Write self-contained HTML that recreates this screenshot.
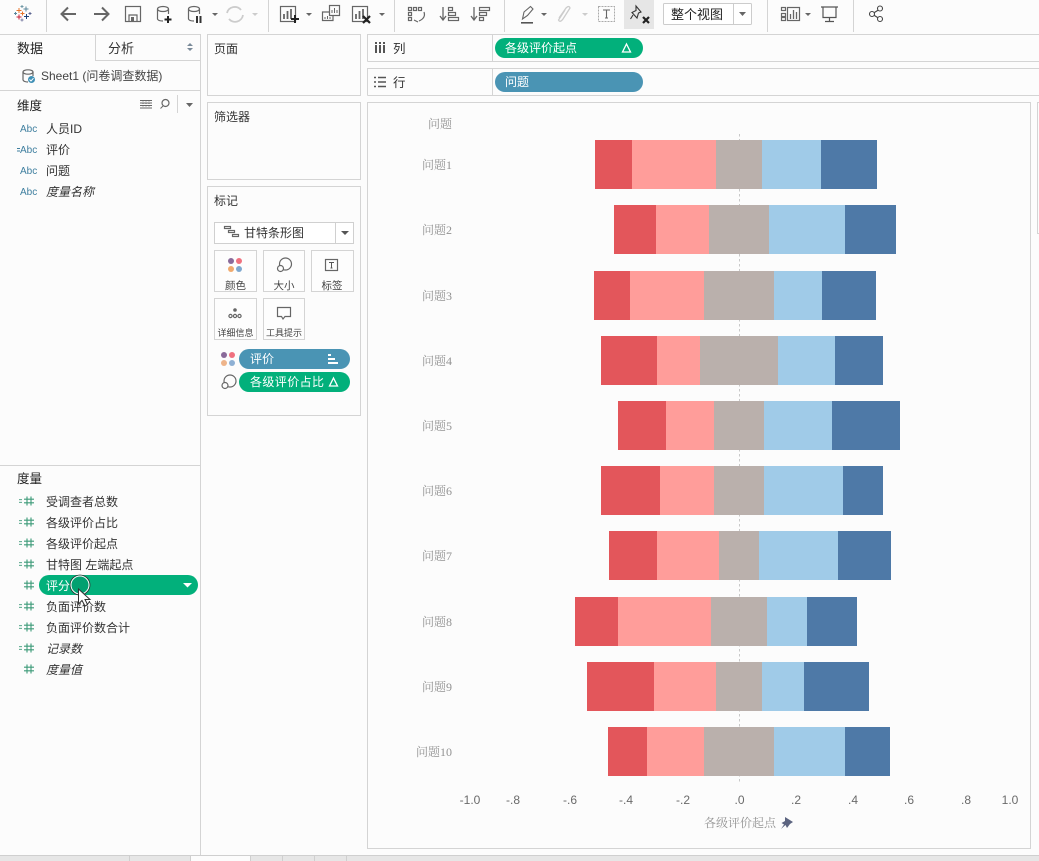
<!DOCTYPE html>
<html><head><meta charset="utf-8"><style>
html,body{margin:0;padding:0;background:#fcfcfc;width:1039px;height:861px;overflow:hidden}
svg{display:block}
text{font-family:"Liberation Sans","Noto Sans CJK SC",sans-serif;font-size:12px;fill:#333}
.c{font-family:"Liberation Serif","Noto Serif CJK SC",serif;font-size:12px;fill:#929292}
.t{font-size:12px;fill:#6a6a6a}
.w{fill:#fff}
.a{font-size:10px;fill:#3f7f9f}
.i{font-style:italic}
.s{font-size:10.5px;fill:#444}
.xs{font-size:9px;fill:#444}
.ln{stroke:#d4d4d4;stroke-width:1;fill:none}
.ic{stroke:#666;stroke-width:1.2;fill:none}
.g{stroke:#3c9a78;stroke-width:1.1;fill:none}
</style></head><body>
<svg width="1039" height="861" viewBox="0 0 1039 861" xmlns="http://www.w3.org/2000/svg">
<rect width="1039" height="861" fill="#fcfcfc"/>
<!-- toolbar separators -->
<g class="ln"><path d="M46.500 0V32M268.500 0V32M394.500 0V32M504.500 0V32M767.500 0V32M853.500 0V32"/></g>
<!-- logo -->
<g stroke-width="1" fill="none">
<path d="M19 8V13M16.500 10.500H21.500" stroke="#e8762b"/>
<path d="M19 14.500V19.500M16.500 17H21.500" stroke="#c72037"/>
<path d="M26 6.500V11.500M23.500 9H28.500" stroke="#5b879b"/>
<path d="M26.500 14V19M24 16.500H29" stroke="#1f447a"/>
<path d="M22.500 11.500V15.500M20.500 13.500H24.500" stroke="#e8762b"/>
<path d="M22 5V8M20.500 6.500H23.500" stroke="#7099a6"/>
<path d="M22 18.500V21.500M20.500 20H23.500" stroke="#7c7fa5"/>
<path d="M15.500 12V15M14 13.500H17" stroke="#59879b"/>
<path d="M30 12V15M28.500 13.500H31.500" stroke="#5b6591"/>
</g>
<!-- back / forward -->
<path d="M76 14H62M68 7.500L61.500 14L68 20.500" stroke="#666" stroke-width="2" fill="none"/>
<path d="M94 14H108M102 7.500L108.500 14L102 20.500" stroke="#666" stroke-width="2" fill="none"/>
<!-- save -->
<g class="ic"><rect x="125.500" y="6.500" width="15" height="15"/><path d="M129 21V15H137V21"/></g><rect x="131" y="17" width="3" height="4" fill="#666"/>
<!-- data + -->
<g class="ic"><ellipse cx="163" cy="9" rx="5.500" ry="2.500"/><path d="M157.500 9V19Q158 21 163 21M168.500 9V14"/></g>
<path d="M168 16V23M164.500 19.500H171.500" stroke="#222" stroke-width="2"/>
<g class="ic"><ellipse cx="194" cy="9" rx="5.500" ry="2.500"/><path d="M188.500 9V19Q189 21 194 21M199.500 9V14"/></g>
<path d="M197 16V23M200.500 16V23" stroke="#333" stroke-width="2"/>
<path d="M212 13H218L215 16Z" fill="#666"/>
<g fill="none" stroke="#ccc" stroke-width="1.800"><path d="M227 13A8 8 0 0 1 241 10"/><path d="M243 15A8 8 0 0 1 229 19"/></g>
<path d="M252 13H258L255 16Z" fill="#ccc"/>
<!-- new worksheet -->
<g class="ic"><rect x="280.500" y="6.500" width="15" height="15"/></g>
<path d="M284 19V14M287.500 19V11M291 19V9" stroke="#666" stroke-width="1.800"/>
<path d="M295 15V23M291 19H299" stroke="#222" stroke-width="2"/>
<path d="M306 13H312L309 16Z" fill="#666"/>
<g class="ic" stroke-width="1"><rect x="329.500" y="5.500" width="10" height="10" fill="#fcfcfc"/><path d="M329 12H322.500V20.500H333V16"/></g>
<path d="M332 13V10M334.500 13V8M337 13V10M325 19V17M327.500 19V16M330 19V17" stroke="#666"/>
<g class="ic"><rect x="352.500" y="6.500" width="15" height="15"/></g>
<path d="M356 19V14M359.500 19V11M363 19V9" stroke="#666" stroke-width="1.800"/>
<path d="M363 16L370 23M370 16L363 23" stroke="#222" stroke-width="2.200"/>
<path d="M379 13H385L382 16Z" fill="#666"/>
<!-- swap -->
<g class="ic" stroke-width="1"><rect x="408.500" y="7.500" width="3" height="3"/><rect x="413.500" y="7.500" width="3" height="3"/><rect x="418.500" y="7.500" width="3" height="3"/><rect x="408.500" y="12.500" width="3" height="3"/><rect x="408.500" y="17.500" width="3" height="3"/><path d="M424 12Q426 18 419 21M414 20L418 22"/></g>
<!-- sort -->
<path d="M443 7V19M440 16L443 20L446 16" stroke="#666" stroke-width="1.300" fill="none"/>
<g class="ic" stroke-width="1"><rect x="448.500" y="7.500" width="4" height="3"/><rect x="448.500" y="12.500" width="7" height="3"/><rect x="448.500" y="17.500" width="10" height="3"/></g>
<path d="M474 7V19M471 16L474 20L477 16" stroke="#666" stroke-width="1.300" fill="none"/>
<g class="ic" stroke-width="1"><rect x="479.500" y="7.500" width="10" height="3"/><rect x="479.500" y="12.500" width="7" height="3"/><rect x="479.500" y="17.500" width="4" height="3"/></g>
<!-- highlight -->
<path d="M522.500 19L524 12L530.500 6.500L533 9L527.500 15.500Z" stroke="#666" stroke-width="1.100" fill="none"/>
<rect x="521" y="22" width="12" height="1.600" fill="#555"/>
<path d="M541 13H547L544 16Z" fill="#666"/>
<path d="M559 18L566 8Q569 5 570 8L563 19Q560 23 558.500 20L565 10" stroke="#ccc" stroke-width="1.300" fill="none"/>
<path d="M582 13H588L585 16Z" fill="#ccc"/>
<rect x="598.500" y="6.500" width="16" height="15" fill="none" stroke="#aaa" stroke-dasharray="2 1"/>
<path d="M603 10H610M606.500 10V18M605 18H608" stroke="#666" stroke-width="1.100" fill="none"/>
<!-- pin active -->
<rect x="624" y="0" width="30" height="29" fill="#e6e6e6"/>
<path d="M636 6L641 12L638.500 13L637 18L632 12.500L636 10.500ZM633 15L630.500 19" stroke="#333" stroke-width="1.100" fill="none"/>
<path d="M643 17L649 23M649 17L643 23" stroke="#222" stroke-width="2.200"/>
<!-- view dropdown -->
<rect x="663.500" y="3.500" width="88" height="21" rx="1" fill="#fff" stroke="#ccc"/>
<path d="M733.500 3V25" stroke="#ccc"/>
<text x="671" y="19" style="font-size:13px;fill:#222">整个视图</text>
<path d="M739 12H746L742.500 16Z" fill="#666"/>
<!-- show me -->
<g class="ic" stroke-width="1"><rect x="781.500" y="7.500" width="4" height="3"/><rect x="781.500" y="13.500" width="4" height="3"/><rect x="781.500" y="17.500" width="4" height="3"/><rect x="787.500" y="7.500" width="12" height="13"/></g>
<path d="M790.500 19V14M793.500 19V10M796.500 19V12" stroke="#666" stroke-width="1.300"/>
<path d="M805 13H811L808 16Z" fill="#666"/>
<!-- presentation -->
<path d="M821 7H838M823 7.500V17.500H836V7.500M829.500 17.500V22M825 21.500H834" stroke="#555" stroke-width="1.200" fill="none"/>
<!-- share -->
<g stroke="#444" stroke-width="1.100" fill="#fcfcfc"><path d="M872 14L880 9M872 14L880 19"/><circle cx="872" cy="14" r="2.500"/><circle cx="880" cy="8.500" r="2.500"/><circle cx="880" cy="19" r="2.500"/></g>

<!-- left panel -->
<g class="ln">
<path d="M0 34.500H200.500V855"/>
<path d="M95.500 35V60.500H200"/>
<path d="M0 90.500H200"/>
<path d="M177.500 95V113"/>
<path d="M0 465.500H200"/>
</g>
<text x="17" y="53" style="font-size:13px;fill:#222">数据</text>
<text x="108" y="53" style="font-size:13px;fill:#333">分析</text>
<path d="M187 46L190 43L193 46ZM187 48L190 51L193 48Z" fill="#7a8a99"/>
<g class="ic" stroke-width="1"><ellipse cx="28" cy="72" rx="5" ry="2.200"/><path d="M23 72V80Q24 82 28 82M33 72V76"/></g>
<circle cx="31.500" cy="79.500" r="3.500" fill="#3f8fb5"/>
<path d="M29.500 79.500L31 81L33.500 78.200" stroke="#fff" fill="none"/>
<text x="41" y="80" style="font-size:12px;fill:#444">Sheet1 (问卷调查数据)</text>

<text x="17" y="110" style="font-size:12.500px;fill:#222">维度</text>
<g stroke="#666" stroke-width="0.900"><path d="M140 100.500H152M140 103H152M140 105.500H152M140 108H152"/><path d="M143 100V108M146 100V108M149 100V108" stroke-dasharray="1.500 1"/></g>
<circle cx="165.500" cy="103" r="3.500" class="ic" stroke-width="1"/><path d="M163 106L160.500 108.500" stroke="#666"/>
<path d="M186 103H193L189.500 107Z" fill="#666"/>
<text x="20" y="132" class="a">Abc</text><text x="46" y="133">人员ID</text>
<path d="M17 148.500H20M17 151H20" stroke="#3f7f9f" stroke-width="0.900"/><text x="20" y="153" class="a">Abc</text><text x="46" y="154">评价</text>
<text x="20" y="174" class="a">Abc</text><text x="46" y="175">问题</text>
<text x="20" y="195" class="a">Abc</text><text x="46" y="196" class="i">度量名称</text>

<text x="17" y="483" style="font-size:12.500px;fill:#222">度量</text>
<defs><g id="h"><path d="M3 -4.500L3 4.500M7 -4.500L7 4.500M0 -1.800H10M0 1.800H10" class="g"/></g>
<g id="e"><path d="M-5 -1.300H-2M-5 1.300H-2" stroke="#3c9a78" stroke-width="0.900"/></g></defs>
<g transform="translate(24,501)"><use href="#e"/><use href="#h"/></g><text x="46" y="506">受调查者总数</text>
<g transform="translate(24,522)"><use href="#e"/><use href="#h"/></g><text x="46" y="527">各级评价占比</text>
<g transform="translate(24,543)"><use href="#e"/><use href="#h"/></g><text x="46" y="548">各级评价起点</text>
<g transform="translate(24,564)"><use href="#e"/><use href="#h"/></g><text x="46" y="569">甘特图 左端起点</text>
<g transform="translate(24,585)"><use href="#h"/></g>
<rect x="39" y="575" width="159" height="20" rx="10" fill="#02b07b"/>
<text x="46" y="590" class="w">评分</text>
<path d="M183 583H192L187.500 587.500Z" fill="#fff"/>
<g transform="translate(24,606)"><use href="#e"/><use href="#h"/></g><text x="46" y="611">负面评价数</text>
<g transform="translate(24,627)"><use href="#e"/><use href="#h"/></g><text x="46" y="632">负面评价数合计</text>
<g transform="translate(24,648)"><use href="#e"/><use href="#h"/></g><text x="46" y="653" class="i">记录数</text>
<g transform="translate(24,669)"><use href="#h"/></g><text x="46" y="674" class="i">度量值</text>
<circle cx="80" cy="585" r="9" fill="#02a070" stroke="#fff" stroke-width="1"/>
<circle cx="80" cy="585" r="10" fill="none" stroke="#333" stroke-width="0.800"/>
<path d="M78.500 589V604L82 600.500L85 606L87.500 604.500L85 599.500H90Z" fill="#fff" stroke="#333" stroke-width="1"/>

<!-- middle cards -->
<g class="ln">
<rect x="207.500" y="34.500" width="153" height="61"/>
<rect x="207.500" y="102.500" width="153" height="77"/>
<rect x="207.500" y="186.500" width="153" height="229"/>
</g>
<text x="214" y="53">页面</text>
<text x="214" y="121">筛选器</text>
<text x="214" y="205">标记</text>
<rect x="214.500" y="222.500" width="139" height="21" fill="#fff" stroke="#d0d0d0"/>
<path d="M335.500 223V243" stroke="#d0d0d0"/>
<g class="ic" stroke-width="0.900"><rect x="224.500" y="226.500" width="6" height="2"/><rect x="228.500" y="230.500" width="6" height="2"/><rect x="232.500" y="234.500" width="6" height="2"/></g>
<text x="244" y="237">甘特条形图</text>
<path d="M341 231H349L345 235Z" fill="#555"/>
<g fill="#fdfdfd" stroke="#d4d4d4">
<rect x="214.500" y="250.500" width="42" height="41"/>
<rect x="263.500" y="250.500" width="41" height="41"/>
<rect x="311.500" y="250.500" width="42" height="41"/>
<rect x="214.500" y="298.500" width="42" height="41"/>
<rect x="263.500" y="298.500" width="41" height="41"/>
</g>
<circle cx="231" cy="261" r="3" fill="#8a6a9a"/><circle cx="239" cy="261" r="3" fill="#f0717f"/><circle cx="231" cy="269" r="3" fill="#f0aa6e"/><circle cx="239" cy="269" r="3" fill="#7ea8cf"/>
<text x="235.500" y="289" text-anchor="middle" class="s">颜色</text>
<g class="ic" stroke-width="1"><circle cx="285.500" cy="264" r="6"/><circle cx="280.500" cy="268.500" r="3" fill="#fdfdfd"/></g>
<text x="284" y="289" text-anchor="middle" class="s">大小</text>
<rect x="325.500" y="259.500" width="12" height="11" class="ic" stroke-width="1"/><path d="M329 262.500H334M331.500 262.500V268M330.500 268H332.500" stroke="#555" fill="none"/>
<text x="332" y="289" text-anchor="middle" class="s">标签</text>
<circle cx="235" cy="310" r="1.800" fill="#666"/><g class="ic" stroke-width="0.800"><circle cx="230.500" cy="316" r="1.600"/><circle cx="235" cy="316" r="1.600"/><circle cx="239.500" cy="316" r="1.600"/></g>
<text x="235.500" y="336" text-anchor="middle" class="xs">详细信息</text>
<path d="M277.500 307.500H290.500V316.500H285L283 319L281.500 316.500H277.500Z" class="ic" stroke-width="1"/>
<text x="284" y="336" text-anchor="middle" class="xs">工具提示</text>
<circle cx="224" cy="355" r="3" fill="#8a6a9a"/><circle cx="232" cy="355" r="3" fill="#f0717f"/><circle cx="224" cy="363" r="3" fill="#eeb48a"/><circle cx="232" cy="363" r="3" fill="#8eb0d4"/>
<rect x="239" y="349" width="111" height="20" rx="10" fill="#4a94b4"/>
<text x="250" y="363" class="w">评价</text>
<path d="M328 354H331V356H328ZM328 358H335V360H328ZM328 362H338V364H328Z" fill="#fff"/>
<g class="ic" stroke-width="1"><circle cx="230" cy="381" r="6"/><circle cx="225" cy="385.500" r="3" fill="#fcfcfc"/></g>
<rect x="239" y="372" width="111" height="20" rx="10" fill="#02b07b"/>
<text x="250" y="386" class="w" style="letter-spacing:.4px">各级评价占比</text>
<path d="M333.500 378L337.500 386H329.500Z" stroke="#fff" stroke-width="1.300" fill="none"/>

<!-- shelves -->
<g class="ln">
<path d="M367.500 61.500V34.500H1039M367.500 61.500H1039"/>
<path d="M367.500 95.500V68.500H1039M367.500 95.500H1039"/>
<path d="M492.500 35V61M492.500 69V95"/>
</g>
<path d="M376 45V53M380 45V53M384 45V53" stroke="#555" stroke-width="2"/>
<path d="M376 42V44M380 42V44M384 42V44" stroke="#555" stroke-width="2"/>
<text x="393" y="53" style="font-size:12.500px">列</text>
<path d="M374 77.500H376M374 82H376M374 86.500H376M378 77.500H386M378 82H386M378 86.500H386" stroke="#555" stroke-width="1.600"/>
<text x="393" y="87" style="font-size:12.500px">行</text>
<rect x="495" y="38" width="148" height="20" rx="10" fill="#02b07b"/>
<text x="505" y="52" class="w">各级评价起点</text>
<path d="M626.500 44L630.500 52H622.500Z" stroke="#fff" stroke-width="1.300" fill="none"/>
<rect x="495" y="72" width="148" height="20" rx="10" fill="#4a94b4"/>
<text x="505" y="86" class="w">问题</text>

<!-- viz frame -->
<path d="M367.500 848.500V102.500H1030.500V848.500Z" class="ln" fill="#fdfdfd"/>
<path d="M1039 102.500H1037.500V233.500H1039" class="ln"/>
<path d="M739.500 134V784" stroke="#c8c8c8" stroke-dasharray="2.500 2.500"/>
<!-- bars -->
<g>
<rect x="595" y="140" width="37" height="49" fill="#e3565b"/><rect x="632" y="140" width="84" height="49" fill="#ff9d9a"/><rect x="716" y="140" width="46" height="49" fill="#bab0ac"/><rect x="762" y="140" width="59" height="49" fill="#a0cbe8"/><rect x="821" y="140" width="56" height="49" fill="#4e79a7"/>
<rect x="614" y="205" width="42" height="49" fill="#e3565b"/><rect x="656" y="205" width="53" height="49" fill="#ff9d9a"/><rect x="709" y="205" width="60" height="49" fill="#bab0ac"/><rect x="769" y="205" width="76" height="49" fill="#a0cbe8"/><rect x="845" y="205" width="51" height="49" fill="#4e79a7"/>
<rect x="594" y="271" width="36" height="49" fill="#e3565b"/><rect x="630" y="271" width="74" height="49" fill="#ff9d9a"/><rect x="704" y="271" width="70" height="49" fill="#bab0ac"/><rect x="774" y="271" width="48" height="49" fill="#a0cbe8"/><rect x="822" y="271" width="54" height="49" fill="#4e79a7"/>
<rect x="601" y="336" width="56" height="49" fill="#e3565b"/><rect x="657" y="336" width="43" height="49" fill="#ff9d9a"/><rect x="700" y="336" width="78" height="49" fill="#bab0ac"/><rect x="778" y="336" width="57" height="49" fill="#a0cbe8"/><rect x="835" y="336" width="48" height="49" fill="#4e79a7"/>
<rect x="618" y="401" width="48" height="49" fill="#e3565b"/><rect x="666" y="401" width="48" height="49" fill="#ff9d9a"/><rect x="714" y="401" width="50" height="49" fill="#bab0ac"/><rect x="764" y="401" width="68" height="49" fill="#a0cbe8"/><rect x="832" y="401" width="68" height="49" fill="#4e79a7"/>
<rect x="601" y="466" width="59" height="49" fill="#e3565b"/><rect x="660" y="466" width="54" height="49" fill="#ff9d9a"/><rect x="714" y="466" width="50" height="49" fill="#bab0ac"/><rect x="764" y="466" width="79" height="49" fill="#a0cbe8"/><rect x="843" y="466" width="40" height="49" fill="#4e79a7"/>
<rect x="609" y="531" width="48" height="49" fill="#e3565b"/><rect x="657" y="531" width="62" height="49" fill="#ff9d9a"/><rect x="719" y="531" width="40" height="49" fill="#bab0ac"/><rect x="759" y="531" width="79" height="49" fill="#a0cbe8"/><rect x="838" y="531" width="53" height="49" fill="#4e79a7"/>
<rect x="575" y="597" width="43" height="49" fill="#e3565b"/><rect x="618" y="597" width="93" height="49" fill="#ff9d9a"/><rect x="711" y="597" width="56" height="49" fill="#bab0ac"/><rect x="767" y="597" width="40" height="49" fill="#a0cbe8"/><rect x="807" y="597" width="50" height="49" fill="#4e79a7"/>
<rect x="587" y="662" width="67" height="49" fill="#e3565b"/><rect x="654" y="662" width="62" height="49" fill="#ff9d9a"/><rect x="716" y="662" width="46" height="49" fill="#bab0ac"/><rect x="762" y="662" width="42" height="49" fill="#a0cbe8"/><rect x="804" y="662" width="65" height="49" fill="#4e79a7"/>
<rect x="608" y="727" width="39" height="49" fill="#e3565b"/><rect x="647" y="727" width="57" height="49" fill="#ff9d9a"/><rect x="704" y="727" width="70" height="49" fill="#bab0ac"/><rect x="774" y="727" width="71" height="49" fill="#a0cbe8"/><rect x="845" y="727" width="45" height="49" fill="#4e79a7"/>
</g>
<!-- row labels -->
<g class="c" text-anchor="end">
<text class="c" x="452" y="128" text-anchor="end">问题</text>
<text class="c" x="452" y="169" text-anchor="end">问题1</text>
<text class="c" x="452" y="234" text-anchor="end">问题2</text>
<text class="c" x="452" y="300" text-anchor="end">问题3</text>
<text class="c" x="452" y="365" text-anchor="end">问题4</text>
<text class="c" x="452" y="430" text-anchor="end">问题5</text>
<text class="c" x="452" y="495" text-anchor="end">问题6</text>
<text class="c" x="452" y="560" text-anchor="end">问题7</text>
<text class="c" x="452" y="626" text-anchor="end">问题8</text>
<text class="c" x="452" y="691" text-anchor="end">问题9</text>
<text class="c" x="452" y="756" text-anchor="end">问题10</text>
</g>
<!-- axis -->
<text class="t" x="470" y="804" text-anchor="middle">-1.0</text>
<text class="t" x="513" y="804" text-anchor="middle">-.8</text>
<text class="t" x="570" y="804" text-anchor="middle">-.6</text>
<text class="t" x="626" y="804" text-anchor="middle">-.4</text>
<text class="t" x="683" y="804" text-anchor="middle">-.2</text>
<text class="t" x="739.500" y="804" text-anchor="middle">.0</text>
<text class="t" x="796" y="804" text-anchor="middle">.2</text>
<text class="t" x="853" y="804" text-anchor="middle">.4</text>
<text class="t" x="909" y="804" text-anchor="middle">.6</text>
<text class="t" x="966" y="804" text-anchor="middle">.8</text>
<text class="t" x="1010" y="804" text-anchor="middle">1.0</text>
<text class="c" x="704" y="827">各级评价起点</text>
<path d="M785 817L793 822L790 824L787 828L785.500 825L781 829L784 824.500L781.500 823L785 821Z" fill="#5c6480"/>

<!-- bottom tabs -->
<rect x="0" y="855" width="1039" height="6" fill="#e6e6e6"/>
<path d="M0 855.500H1039" stroke="#cfcfcf"/>
<rect x="191" y="856" width="59" height="5" fill="#fcfcfc"/>
<path d="M129.500 856V861M190.500 856V861M250.500 856V861M282.500 856V861M314.500 856V861M346.500 856V861" stroke="#cfcfcf"/>
</svg>
</body></html>
